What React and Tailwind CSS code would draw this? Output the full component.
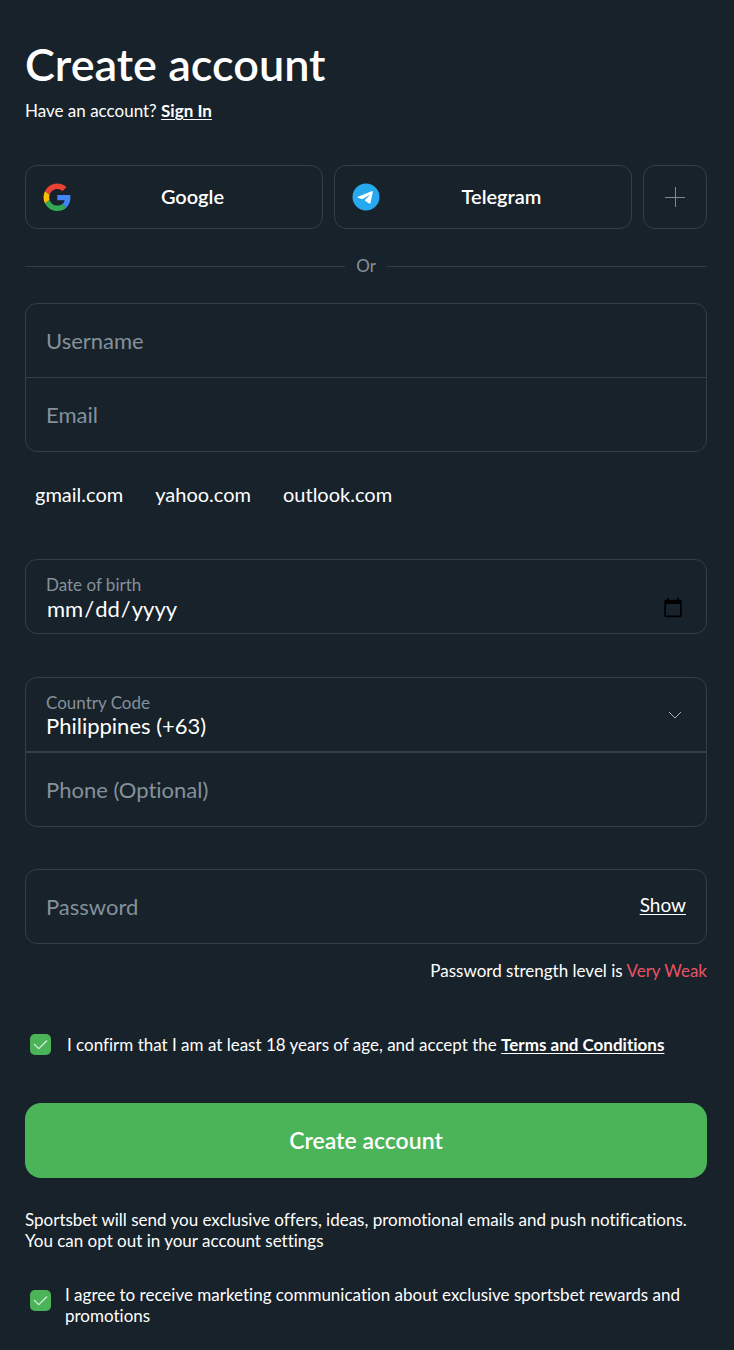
import { useState } from "react";

const GoogleIcon = () => (
  <svg viewBox="-1 -1 49 49" className="size-7 shrink-0" aria-hidden="true">
    <path fill="#EA4335" d="M24 9.5c3.54 0 6.71 1.22 9.21 3.6l6.85-6.85C35.9 2.38 30.47 0 24 0 14.62 0 6.51 5.38 2.56 13.22l7.98 6.19C12.43 13.72 17.74 9.5 24 9.5z" />
    <path fill="#4285F4" d="M46.98 24.55c0-1.57-.15-3.09-.38-4.55H24v9.02h12.94c-.58 2.96-2.26 5.48-4.78 7.18l7.73 6c4.51-4.18 7.09-10.36 7.09-17.65z" />
    <path fill="#FBBC05" d="M10.53 28.59c-.48-1.45-.76-2.99-.76-4.59s.27-3.14.76-4.59l-7.98-6.19C.92 16.46 0 20.12 0 24s.92 7.54 2.56 10.78l7.97-6.19z" />
    <path fill="#34A853" d="M24 48c6.48 0 11.93-2.13 15.89-5.81l-7.73-6c-2.15 1.45-4.92 2.3-8.16 2.3-6.26 0-11.57-4.22-13.47-9.91l-7.98 6.19C6.51 42.62 14.62 48 24 48z" />
  </svg>
);

const TelegramIcon = () => (
  <svg viewBox="0 0 28 28" className="size-7 shrink-0" aria-hidden="true">
    <circle cx="14" cy="14" r="13.5" fill="#26a9ef" />
    <path
      fill="#fff"
      d="M6 13.7 19.6 8.2c.7-.3 1.3.1 1.1 1l-2.1 10.5c-.2.9-.8 1.1-1.5.7l-3.7-2.5c-.6-.4-.6-.9-.1-1.4l4.3-4.3c.3-.4 0-.6-.4-.3l-5.8 3.8c-.5.3-.9.4-1.5.2L6.2 14.9c-.8-.3-.8-.9-.2-1.2z"
    />
  </svg>
);

const SocialButton = ({ icon, children }) => (
  <button type="button" className="flex h-16 flex-1 items-center rounded-xl border border-[#333e47] pr-2 pl-[17px]">
    {icon}
    <span className="flex-1 pb-0.5 text-xl font-semibold">{children}</span>
  </button>
);

const TextField = ({ label, type = "text" }) => (
  <input
    type={type}
    aria-label={label}
    placeholder={label}
    className="h-[73px] w-full min-w-0 bg-transparent px-5 text-[22px] outline-none placeholder:text-[#84919b]"
  />
);

const FieldGroup = ({ children }) => (
  <div className="overflow-hidden rounded-xl border border-[#333e47]">{children}</div>
);

const Checkbox = ({ id }) => (
  <span className="grid size-[21px] shrink-0 place-items-center">
    <input
      id={id}
      type="checkbox"
      defaultChecked
      className="peer col-start-1 row-start-1 size-[21px] appearance-none rounded-[5px] border border-[#333e47] checked:border-0 checked:bg-[#4bb358]"
    />
    <svg
      viewBox="0 0 21 21"
      fill="none"
      stroke="#d3f0d6"
      strokeWidth="1.2"
      className="pointer-events-none col-start-1 row-start-1 hidden size-[21px] peer-checked:block"
      aria-hidden="true"
    >
      <path d="m4 10 4.8 4.7L17 6.5" />
    </svg>
  </span>
);

const App = () => {
  const [showPassword, setShowPassword] = useState(false);

  return (
    <main className="min-h-screen bg-[#18222a] pt-[39px] pr-[27px] pb-[23px] pl-[25px] font-['Lato',sans-serif] text-[17px] text-white [font-variant-ligatures:none]">
      <h1 className="text-[45px] leading-[50px] font-semibold">Create account</h1>
      <p className="mt-[11px] leading-[21px]">
        Have an account?{" "}
        <a href="#signin" className="font-bold underline underline-offset-2">Sign In</a>
      </p>

      <form onSubmit={(e) => e.preventDefault()}>
        <div className="mt-11 flex gap-[11px]">
          <SocialButton icon={<GoogleIcon />}>Google</SocialButton>
          <SocialButton icon={<TelegramIcon />}>Telegram</SocialButton>
          <button type="button" aria-label="+" className="flex size-16 items-center justify-center rounded-xl border border-[#333e47]">
            <svg viewBox="0 0 20 20" className="size-5" stroke="#7d8a93" aria-hidden="true">
              <path d="M0 10.5h20M10.5 0v20" />
            </svg>
          </button>
        </div>

        <div className="mt-[26px] flex items-center gap-[11px] leading-[22px] text-[#84919b]">
          <hr className="flex-1 border-[#333e47]" />
          Or
          <hr className="flex-1 border-[#333e47]" />
        </div>

        <div className="mt-[26px]">
          <FieldGroup>
            <TextField label="Username" />
            <div className="border-t border-[#333e47]">
              <TextField label="Email" type="email" />
            </div>
          </FieldGroup>
        </div>

        <div className="mt-7 flex gap-8 px-[10px] text-xl">
          <button type="button">gmail.com</button>
          <button type="button">yahoo.com</button>
          <button type="button">outlook.com</button>
        </div>

        <div className="mt-[51px]">
          <FieldGroup>
            <div className="px-5 pt-3.5 pb-3">
              <label htmlFor="birth" className="block leading-[21px] text-[#84919b]">Date of birth</label>
              <input id="birth" type="date" className="block h-[26px] w-full bg-transparent text-[22px] outline-none" />
            </div>
          </FieldGroup>
        </div>

        <div className="mt-[43px]">
          <FieldGroup>
            <div className="grid items-center px-5">
              <label htmlFor="country" className="col-start-1 row-start-1 self-start pt-3.5 leading-[21px] text-[#84919b]">
                Country Code
              </label>
              <select id="country" className="col-start-1 row-start-1 h-[73px] w-full appearance-none bg-transparent pt-[21px] text-[22px] outline-none">
                <option>Philippines (+63)</option>
              </select>
              <svg
                viewBox="0 0 14 8"
                fill="none"
                stroke="#a3b1bb"
                className="pointer-events-none col-start-1 row-start-1 mr-1 h-2 w-3.5 justify-self-end"
                aria-hidden="true"
              >
                <path d="m1 1 6 6 6-6" />
              </svg>
            </div>
            <div className="border-t-2 border-[#333e47]">
              <TextField label="Phone (Optional)" type="tel" />
            </div>
          </FieldGroup>
        </div>

        <div className="mt-[42px]">
          <FieldGroup>
            <div className="flex items-center pr-5">
              <TextField label="Password" type={showPassword ? "text" : "password"} />
              <button
                type="button"
                onClick={() => setShowPassword(!showPassword)}
                className="pb-0.5 text-[19px] underline underline-offset-2"
              >
                Show
              </button>
            </div>
          </FieldGroup>
        </div>
        <p className="mt-4 text-right leading-[21px]">
          Password strength level is <span className="text-[#e85266]">Very Weak</span>
        </p>

        <div className="mt-[53px] flex items-center gap-4 pl-[5px]">
          <Checkbox id="terms" />
          <label htmlFor="terms" className="leading-[21px]">
            I confirm that I am at least 18 years of age, and accept the{" "}
            <a href="#terms" className="font-bold underline underline-offset-2">Terms and Conditions</a>
          </label>
        </div>

        <button type="submit" className="mt-12 h-[75px] w-full rounded-2xl bg-[#4bb358] text-[23px] font-semibold">
          Create account
        </button>

        <p className="mt-[31px] leading-[21px]">
          Sportsbet will send you exclusive offers, ideas, promotional emails and push notifications. You can opt out in
          your account settings
        </p>

        <div className="mt-[33px] flex items-start gap-3.5 pl-[5px]">
          <span className="pt-1.5">
            <Checkbox id="marketing" />
          </span>
          <label htmlFor="marketing" className="leading-[21px]">
            I agree to receive marketing communication about exclusive sportsbet rewards and promotions
          </label>
        </div>
      </form>
    </main>
  );
};

export default App;
